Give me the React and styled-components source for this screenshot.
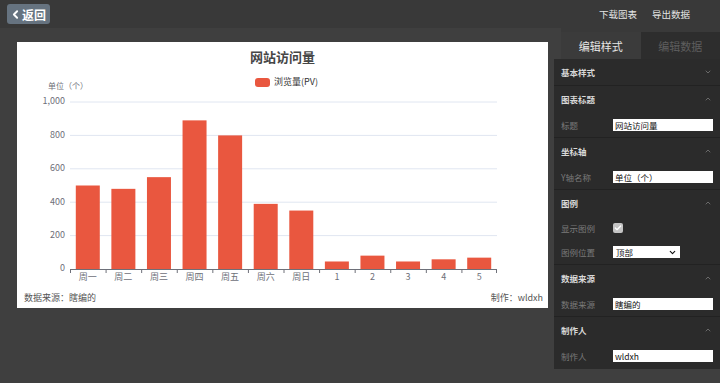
import styled, { createGlobalStyle } from "styled-components";
import { ChevronLeft, ChevronDown, ChevronUp, Check } from "lucide-react";

const GlobalStyle = createGlobalStyle`
  html, body {
    margin: 0;
    padding: 0;
    background: #3f3f3f;
    font-family: "Noto Sans CJK SC", "Noto Sans", sans-serif;
  }
  * {
    box-sizing: border-box;
  }
`;

// 图表数据
const categories = ["周一", "周二", "周三", "周四", "周五", "周六", "周日", "1", "2", "3", "4", "5"];
const values = [500, 480, 550, 890, 800, 390, 350, 45, 80, 45, 58, 68];

const Page = styled.div`
  width: 720px;
  height: 383px;
  display: flex;
  flex-direction: column;
`;

const Header = styled.header`
  height: 28px;
  background: #393939;
  display: flex;
  align-items: center;
  justify-content: space-between;
  padding: 0 30px 0 7px;
`;

const BackButton = styled.button`
  width: 43px;
  height: 20px;
  border: none;
  border-radius: 3px;
  background: #667380;
  color: #fff;
  font-family: inherit;
  font-size: 12px;
  font-weight: 700;
  display: flex;
  align-items: center;
  justify-content: center;
  gap: 0;
  padding: 0 2px 0 0;
`;

const HeaderLinks = styled.div`
  display: flex;
  gap: 15px;
`;

const HeaderLink = styled.span`
  color: #e4e4e4;
  font-size: 9.5px;
`;

const Main = styled.div`
  flex: 1;
  display: flex;
`;

const ChartColumn = styled.div`
  padding: 14px 6px 0 17px;
`;

const Card = styled.div`
  width: 531px;
  height: 266px;
  background: #fff;
  display: flex;
  flex-direction: column;
`;

const Title = styled.div`
  height: 30px;
  line-height: 30px;
  text-align: center;
  font-size: 13px;
  font-weight: 700;
  color: #464646;
`;

const Footer = styled.div`
  height: 21px;
  display: flex;
  align-items: center;
  justify-content: space-between;
  padding: 0 5px 0 7px;
  font-size: 9px;
  color: #555;
`;

const Panel = styled.aside`
  width: 166px;
  display: flex;
  flex-direction: column;
`;

const TabRow = styled.div`
  display: flex;
  margin-left: 7px;
  border-top: 4px solid #393939;
`;

const Tab = styled.div`
  flex: 1;
  height: 27px;
  display: flex;
  align-items: center;
  justify-content: center;
  font-size: 11px;
  background: ${(p) => (p.$active ? "#3b3b3b" : "#2d2d2d")};
  color: ${(p) => (p.$active ? "#e6e6e6" : "#5e5e5e")};
`;

const PanelBody = styled.div`
  background: #2b2b2b;
  padding-bottom: 1px;
`;

const Section = styled.div`
  border-bottom: 1px solid #222;
  &:last-child {
    border-bottom: none;
  }
`;

const SectionHead = styled.div`
  height: 26px;
  display: flex;
  align-items: center;
  justify-content: space-between;
  padding: 0 8px 0 7px;
  font-size: 8.5px;
  font-weight: 700;
  color: #d8d8d8;
`;

const FieldRow = styled.div`
  height: ${(p) => p.$h || 25}px;
  display: flex;
  align-items: center;
  padding: 0 7px;
`;

const Label = styled.span`
  width: 52px;
  font-size: 8.5px;
  color: #7a7a7a;
`;

const Input = styled.div`
  width: 100px;
  height: 12px;
  background: #fff;
  color: #111;
  font-size: 8.5px;
  line-height: 12px;
  padding-left: 2px;
  white-space: nowrap;
`;

const CheckBox = styled.span`
  width: 10px;
  height: 10px;
  border-radius: 2px;
  background: #c4c4c4;
  display: flex;
  align-items: center;
  justify-content: center;
  color: #fff;
`;

const Select = styled.div`
  width: 67px;
  height: 12px;
  background: #fff;
  color: #111;
  font-size: 8.5px;
  display: flex;
  align-items: center;
  justify-content: space-between;
  padding: 0 3px 0 3px;
`;

const axisColor = "#6e7079";

function BarChart() {
  const x0 = 53;
  const x1 = 480;
  const yBase = 197;
  const scale = 167 / 1000;
  const band = (x1 - x0) / categories.length;
  const barW = 24;
  const ticks = [0, 200, 400, 600, 800, 1000];

  return (
    <svg width="531" height="215" style={{ display: "block" }}>
      <rect x="238" y="6" width="15" height="9" rx="3" fill="#e9573f" />
      <text x="257" y="10.5" fontSize="9" fill="#333" dominantBaseline="middle">
        浏览量(PV)
      </text>
      <text x="51" y="15" fontSize="8" fill={axisColor} textAnchor="middle" dominantBaseline="middle">
        单位（个）
      </text>
      {ticks.map((t) => {
        const y = yBase - t * scale;
        return (
          <g key={t}>
            {t > 0 && <line x1={x0} x2={x1} y1={y} y2={y} stroke="#e0e6f1" strokeWidth="1" />}
            <text x="48" y={y} fontSize="9" fill={axisColor} textAnchor="end" dominantBaseline="middle">
              {t.toLocaleString("en-US")}
            </text>
          </g>
        );
      })}
      {values.map((v, i) => {
        const h = v * scale;
        return (
          <rect
            key={i}
            x={x0 + i * band + (band - barW) / 2}
            y={yBase - h}
            width={barW}
            height={h}
            fill="#e9573f"
          />
        );
      })}
      <line x1={x0} x2={x1} y1={yBase + 0.5} y2={yBase + 0.5} stroke={axisColor} />
      {categories.map((c, i) => (
        <line
          key={"t" + i}
          x1={x0 + i * band + 0.5}
          x2={x0 + i * band + 0.5}
          y1={yBase}
          y2={yBase + 4}
          stroke={axisColor}
        />
      ))}
      <line x1={x1 - 0.5} x2={x1 - 0.5} y1={yBase} y2={yBase + 4} stroke={axisColor} />
      {categories.map((c, i) => (
        <text
          key={"l" + i}
          x={x0 + i * band + band / 2}
          y="206"
          fontSize="9"
          fill={axisColor}
          textAnchor="middle"
          dominantBaseline="middle"
        >
          {c}
        </text>
      ))}
    </svg>
  );
}

function Head({ title, open = true }) {
  return (
    <SectionHead>
      <span>{title}</span>
      {open ? <ChevronUp size={8} color="#8a8a8a" strokeWidth={2} /> : <ChevronDown size={8} color="#8a8a8a" strokeWidth={2} />}
    </SectionHead>
  );
}

export default function App() {
  return (
    <Page>
      <GlobalStyle />
      <Header>
        <BackButton>
          <ChevronLeft size={13} strokeWidth={3.5} />
          返回
        </BackButton>
        <HeaderLinks>
          <HeaderLink>下载图表</HeaderLink>
          <HeaderLink>导出数据</HeaderLink>
        </HeaderLinks>
      </Header>
      <Main>
        <ChartColumn>
          <Card>
            <Title>网站访问量</Title>
            <BarChart />
            <Footer>
              <span>数据来源：瞎编的</span>
              <span>制作：wldxh</span>
            </Footer>
          </Card>
        </ChartColumn>
        <Panel>
          <TabRow>
            <Tab $active>编辑样式</Tab>
            <Tab>编辑数据</Tab>
          </TabRow>
          <PanelBody>
            <Section>
              <Head title="基本样式" open={false} />
            </Section>
            <Section>
              <Head title="图表标题" />
              <FieldRow>
                <Label>标题</Label>
                <Input>网站访问量</Input>
              </FieldRow>
            </Section>
            <Section>
              <Head title="坐标轴" />
              <FieldRow>
                <Label>Y轴名称</Label>
                <Input>单位（个）</Input>
              </FieldRow>
            </Section>
            <Section>
              <Head title="图例" />
              <FieldRow $h={24}>
                <Label>显示图例</Label>
                <CheckBox>
                  <Check size={8} strokeWidth={4} />
                </CheckBox>
              </FieldRow>
              <FieldRow $h={24}>
                <Label>图例位置</Label>
                <Select>
                  <span>顶部</span>
                  <ChevronDown size={9} strokeWidth={3} color="#111" />
                </Select>
              </FieldRow>
            </Section>
            <Section>
              <Head title="数据来源" />
              <FieldRow>
                <Label>数据来源</Label>
                <Input>瞎编的</Input>
              </FieldRow>
            </Section>
            <Section>
              <Head title="制作人" />
              <FieldRow>
                <Label>制作人</Label>
                <Input>wldxh</Input>
              </FieldRow>
            </Section>
          </PanelBody>
        </Panel>
      </Main>
    </Page>
  );
}
